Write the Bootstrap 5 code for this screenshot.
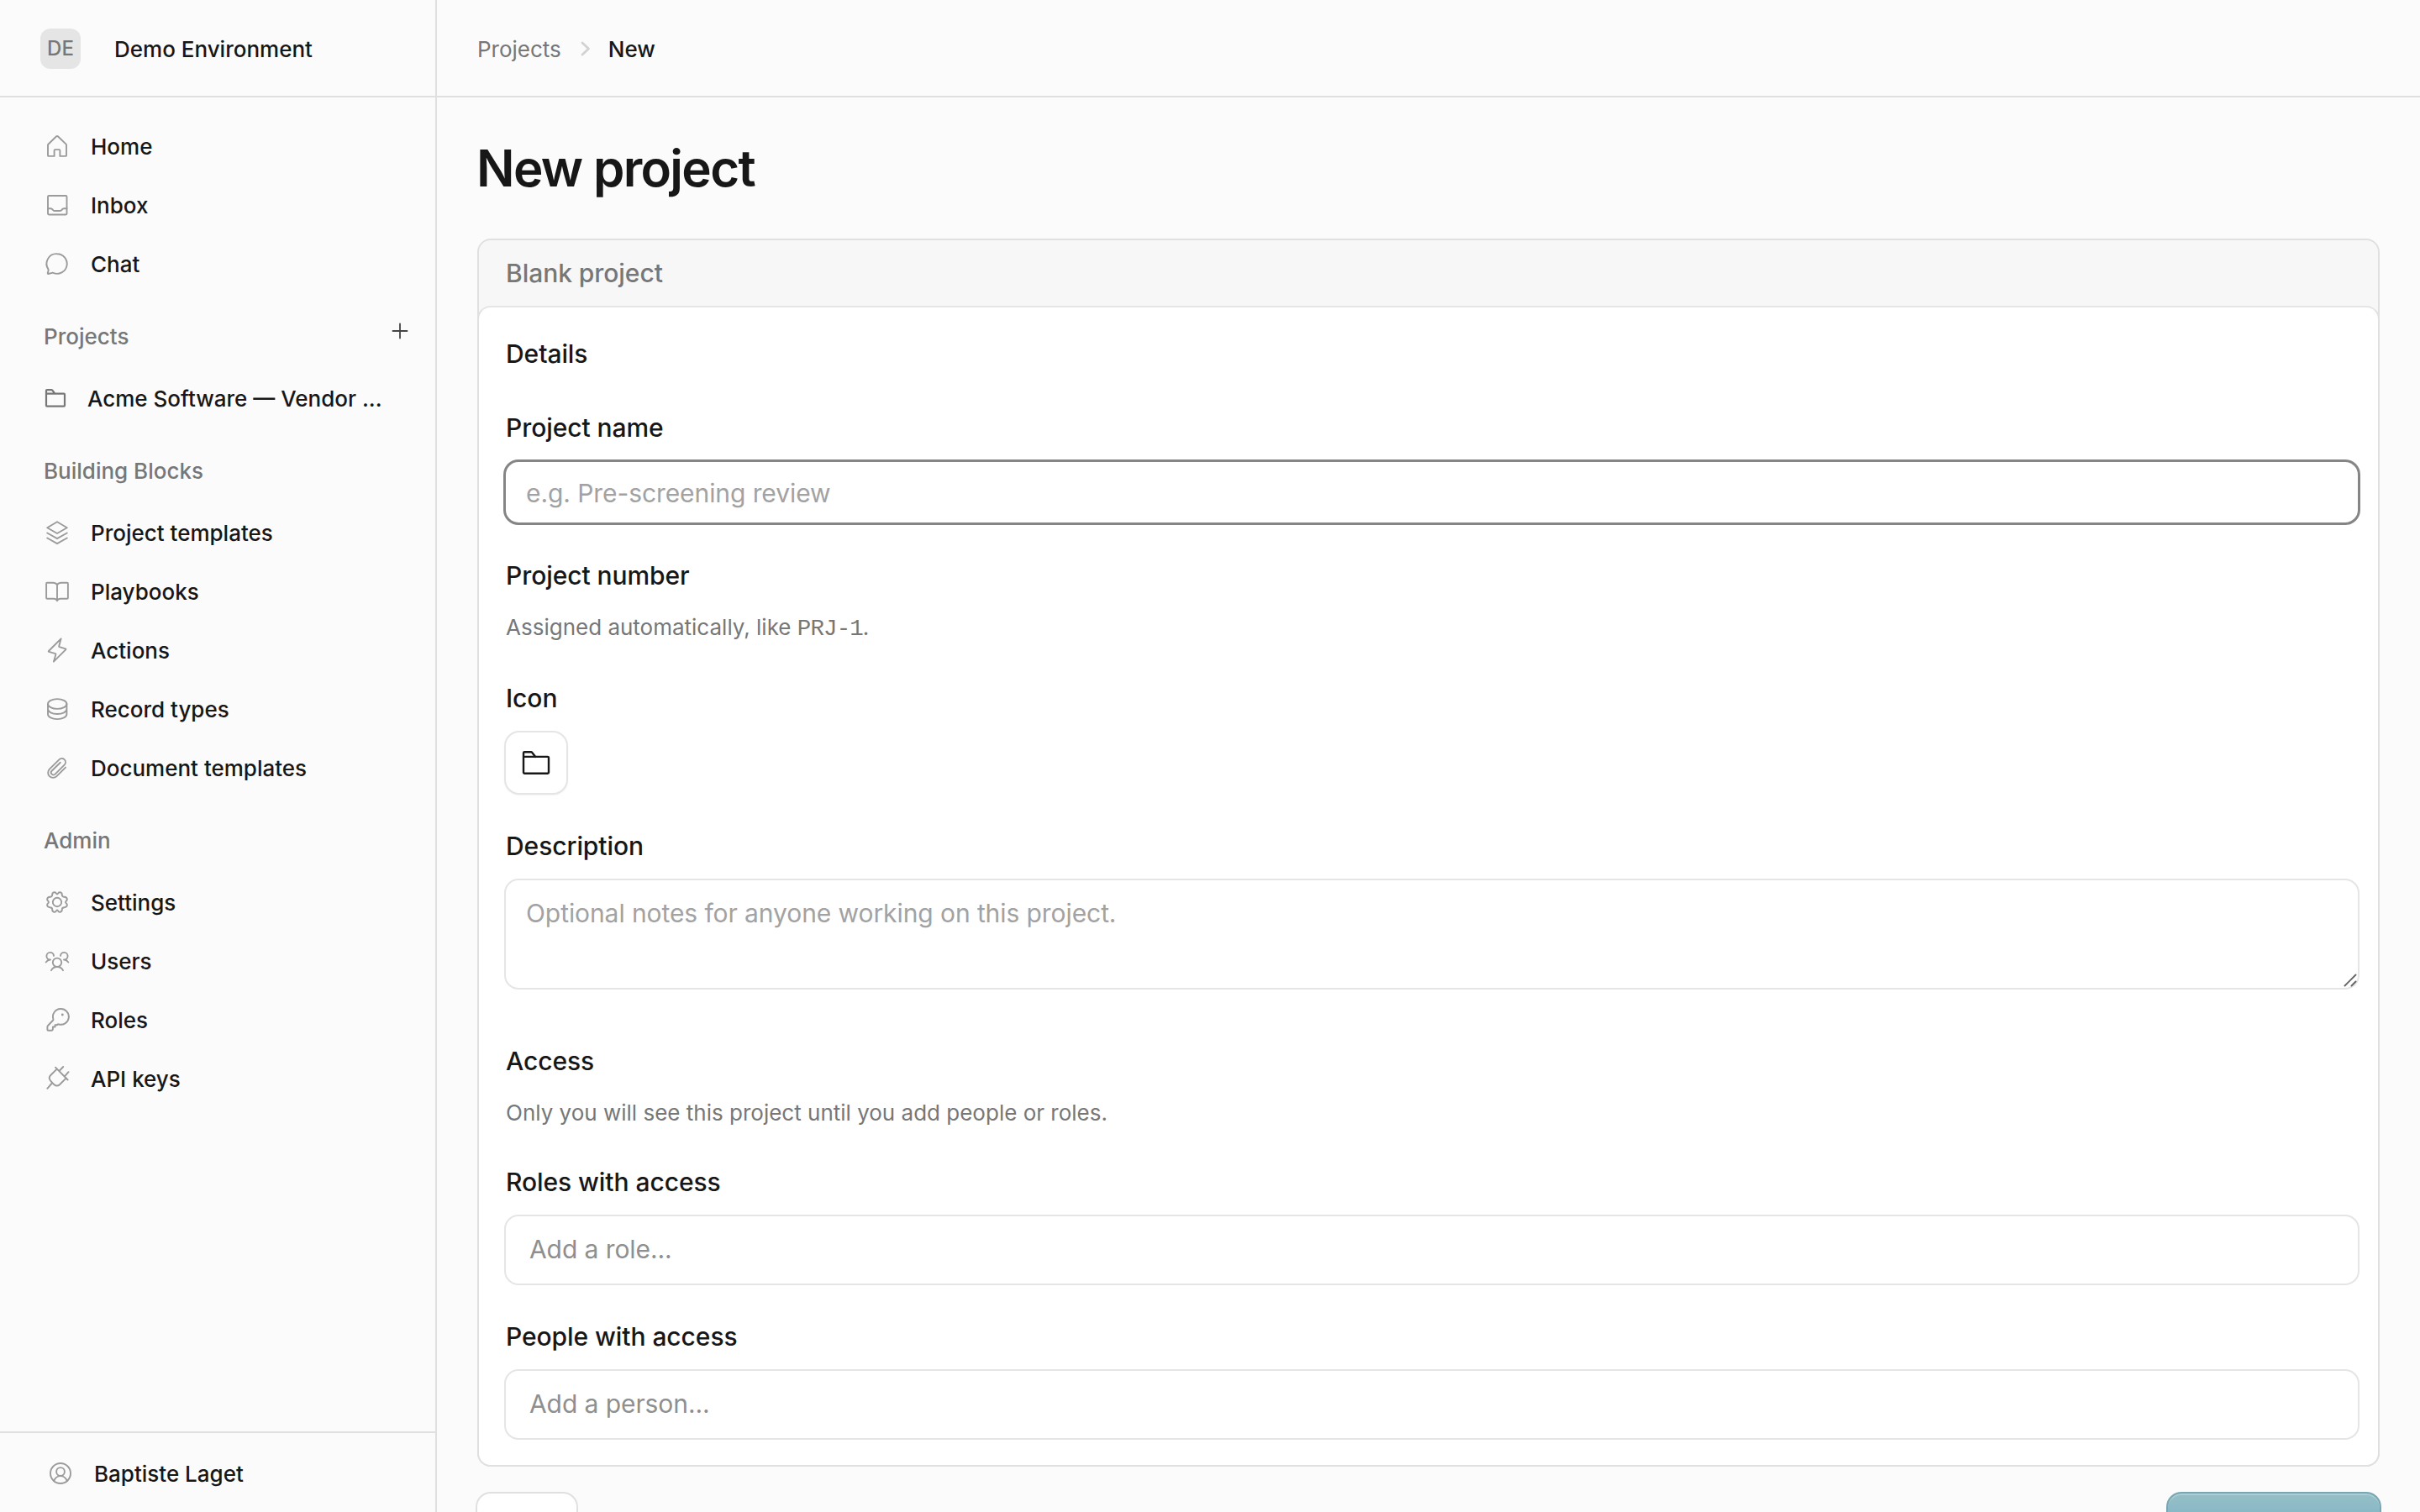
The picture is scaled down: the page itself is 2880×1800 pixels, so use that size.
<!DOCTYPE html>
<html lang="en">
<head>
<meta charset="utf-8">
<meta name="viewport" content="width=device-width, initial-scale=1">
<title>New project</title>
<link href="https://cdn.jsdelivr.net/npm/bootstrap@5.3.0/dist/css/bootstrap.min.css" rel="stylesheet">
<style>
body{font-family:Inter,"Liberation Sans",sans-serif;font-size:26px;line-height:31px;color:#171717;background:#fbfbfb;height:100vh;overflow:hidden}
.side{width:520px;border-right:2px solid #e0e0e0;flex:none}
.bar{height:116px;border-bottom:2px solid #e0e0e0;flex:none;padding-top:2px}
.side .bar{padding-left:48px}
.avatar{width:48px;height:48px;border-radius:12px;background:#e5e5e5;color:#777;font-size:24px;line-height:29px;padding-top:9px;text-align:center}
.semi{font-weight:500}
.org{margin-left:40px;padding-top:1px}
.menu-top{padding-top:23px}
.item{height:70px;padding-left:52px;color:#171717;text-decoration:none;font-weight:500;white-space:nowrap}
.item span{padding-top:1px}
.item svg{width:32px;height:32px;margin-right:24px;color:#9b9b9b}
.item.sub svg{width:28px;height:32px;margin-right:24px;color:#777}
.side svg,.pick svg,.crumb-sep,.grip{fill:none;stroke:currentColor;stroke-width:1.9;stroke-linejoin:round;stroke-linecap:round;flex:none}
.heading{margin:36px 0 23px;padding:0 32px 0 52px;height:31px;color:#777;font-weight:500}
.heading svg{width:20px;height:20px;color:#444;margin-top:-1px;stroke-width:1.8}
.user{height:96px;border-top:2px solid #e0e0e0;padding:2px 0 0 56px;font-weight:500;flex:none}
.user svg{width:32px;height:32px;color:#9b9b9b;margin-right:24px}
.main .bar{padding-left:48px}
.bar .crumb{padding-top:1px}
.muted{color:#777}
.crumb-sep{width:12px;height:18px;color:#d2d2d2;stroke-width:2.8;margin:0 21px 0 23px}
.content{padding:48px 48px 0}
h1{font-size:60px;line-height:72px;font-weight:600;letter-spacing:-.028em;margin:0 0 48px -1px;color:#171717}
.shell{border:2px solid #e0e0e0;border-radius:16px;background:#f7f7f7}
.shell-title{padding:21px 32px;font-size:30px;line-height:36px;font-weight:500;color:#777;letter-spacing:-.05px}
.panel{margin:0 -2px -2px;border:2px solid #e0e0e0;border-top-color:#e5e5e5;border-radius:16px;background:#fff;padding:37px 22px 30px 30px}
.lab{display:block;font-size:30px;line-height:36px;font-weight:500;margin:0 0 21px;padding-left:2px;letter-spacing:-.07px}
.lab.first{margin-bottom:52px}
.field{display:block;width:100%;border:2px solid #e5e5e5;border-radius:17px;background:#fff;font-size:30px;line-height:36px;letter-spacing:-.08px;box-shadow:none;outline:0;padding:19px 24px 17px;height:76px;margin:0 0 43px;color:#171717}
.field::placeholder{color:#a2a2a2;opacity:1}
.field.active{border-color:#858585;box-shadow:0 0 0 1px #858585}
.field.notes{height:132px;padding-top:21px;resize:none;margin-bottom:0}
.notes-wrap{margin-bottom:67px}
.grip{position:absolute;right:3px;bottom:3px;width:16px;height:16px;color:#666}
.field.tall{height:84px;padding:21px 28px 23px}
.field.tall::placeholder{color:#8f8f8f}
.hint{color:#777;height:31px;padding-left:2px;margin:28px 0 51px}
.hint.access{margin-bottom:49px}
code.num{font-family:"Liberation Mono",monospace;font-size:27.500px;letter-spacing:-.9px;line-height:0;color:inherit}
.pick{width:76px;height:76px;border:2px solid #e5e5e5;border-radius:18px;background:#fff;margin-bottom:43px;box-shadow:0 1px 2px rgba(0,0,0,.05);padding:0;color:#171717}
.pick svg{width:40px;height:40px;stroke-width:2.4}
.actions{margin:30px -2px 0}
.btn-plain{width:122px;height:80px;border:2px solid #e0e0e0;border-radius:18px;background:#fff}
.btn-teal{width:256px;height:80px;border:2px solid #78a7b4;border-radius:18px;background:linear-gradient(#95bfc7,#89b8c6 24px,#7fb0c3);box-shadow:inset 0 2px 0 rgba(255,255,255,.22)}
</style>
</head>
<body class="d-flex">
<aside class="side d-flex flex-column vh-100">
  <div class="bar d-flex align-items-center semi"><div class="avatar">DE</div><div class="org">Demo Environment</div></div>
  <nav class="menu-top flex-grow-1">
    <a class="item d-flex align-items-center"><svg viewBox="0 0 32 32"><path d="M5 14.6V27q0 .9.9.9H12.600V21q0-.9.9-.9h5q.9 0 .9.9v6.900h6.700q.9 0 .9-.9V14.600q0-.5-.4-.9L16.800 4.300q-.8-.7-1.600 0L5.400 13.700q-.4.4-.4.9Z"/></svg><span>Home</span></a>
    <a class="item d-flex align-items-center"><svg viewBox="0 0 32 32"><rect x="5" y="5" width="22.500" height="22.500" rx="1.200"/><path d="M5 20.200h3.400q.8 0 1.400.6l1.800 1.700q.6.5 1.400.5h6.400q.8 0 1.400-.5l1.800-1.700q.6-.6 1.400-.6h3.500"/></svg><span>Inbox</span></a>
    <a class="item d-flex align-items-center"><svg viewBox="0 0 32 32"><path d="M16 4.200a11.800 11.800 0 1 1-4.600 22.700q-.7-.3-1.400-.1l-4.500 1.200q-.9.100-.8-.8l.9-3.200q.2-.7-.1-1.400A11.800 11.800 0 0 1 16 4.200Z"/></svg><span>Chat</span></a>
    <div class="heading d-flex justify-content-between"><span>Projects</span><svg viewBox="0 0 20 20"><path d="M10 1.500v17M1.500 10h17"/></svg></div>
    <a class="item sub d-flex align-items-center"><svg viewBox="0 0 28 32"><path d="M3 10.700V7.100q0-1 1-1h5.200q.6 0 1 .4l2.800 3.600M4 10.700h20q1 0 1 1v13q0 1-1 1H4q-1 0-1-1v-14Z" stroke-width="2.200"/></svg><span>Acme Software — Vendor ...</span></a>
    <div class="heading">Building Blocks</div>
    <a class="item d-flex align-items-center"><svg viewBox="0 0 32 32"><path d="M4.200 10.200 16 3.300l11.800 6.900L16 17ZM4.200 16.500 16 23.200l11.800-6.700M4.200 22.500 16 29.200l11.800-6.700"/></svg><span>Project templates</span></a>
    <a class="item d-flex align-items-center"><svg viewBox="0 0 32 32"><path d="M16 8.200q-1.600-2.400-5-2.400H4.100q-1 0-1 1V23.800q0 1 1 1H12q3 0 4 2.400 1-2.400 4-2.400h7.900q1 0 1-1V6.800q0-1-1-1H21q-3.400 0-5 2.400ZM16 8.200v19"/></svg><span>Playbooks</span></a>
    <a class="item d-flex align-items-center"><svg viewBox="0 0 32 32"><path d="M20.600 2.300 6 17q-.6.600.2.900l7.700 2.300q.6.200.5.800l-2.500 8.700L26.200 15.300q.6-.6-.2-.9l-7.300-2.200q-.6-.2-.5-.9Z"/></svg><span>Actions</span></a>
    <a class="item d-flex align-items-center"><svg viewBox="0 0 32 32"><ellipse cx="16.200" cy="10" rx="11.200" ry="5.900"/><path d="M5 10v12.200c0 3.300 5 5.900 11.200 5.900s11.200-2.600 11.200-5.900V10M5 16.100C5 19.400 10 22 16.200 22s11.200-2.600 11.200-5.900"/></svg><span>Record types</span></a>
    <a class="item d-flex align-items-center"><svg viewBox="0 0 32 32"><path d="m26 15.600-10.600 10.500a5.900 5.900 0 0 1-8.500-8.400L18.300 6.300a4.350 4.350 0 0 1 6.500 6.100L13.600 23.600a2.700 2.700 0 0 1-4-3.900L19.800 9.700"/></svg><span>Document templates</span></a>
    <div class="heading">Admin</div>
    <a class="item d-flex align-items-center"><svg viewBox="0 0 32 32"><circle cx="16" cy="16" r="5.200"/><path d="M12.300 4.200Q14.400 4 15 5.800Q16 7.200 17 5.800Q17.600 4 19.700 4.200Q22 5 21.800 7.500Q22 9.700 24.500 9.800Q27.600 10 27.900 12.600Q27.900 14 26.500 15Q25.500 16 26.500 17Q27.900 18 27.900 19.400Q27.600 22 24.500 22.200Q22 22.300 21.800 24.500Q22 27 19.700 27.800Q17.600 28 17 26.200Q16 24.800 15 26.200Q14.400 28 12.300 27.800Q10 27 10.200 24.500Q10 22.300 7.500 22.200Q4.400 22 4.100 19.400Q4.100 18 5.500 17Q6.500 16 5.500 15Q4.100 14 4.100 12.600Q4.400 10 7.500 9.800Q10 9.700 10.200 7.500Q10 5 12.300 4.200Z"/></svg><span>Settings</span></a>
    <a class="item d-flex align-items-center"><svg viewBox="0 0 32 32"><circle cx="16" cy="17.800" r="5.200"/><path d="M9 27.200q2-4.200 7-4.200t7 4.200M12 9.900A4.300 4.300 0 1 0 7.400 14.500Q4.600 14.900 2.700 17.500M7.400 14.500H8M20 9.900a4.300 4.300 0 1 1 4.600 4.600q2.800.4 4.700 3M24.600 14.500H24"/></svg><span>Users</span></a>
    <a class="item d-flex align-items-center"><svg viewBox="0 0 32 32"><path d="M20 3a9.400 9.400 0 1 1-2.500 18.300q-.6-.2-1 .2l-.7.800H13.500v2.200h-2.600v2.300q0 2-1.700 2H5.400q-1 0-1-1v-3.400q0-.8.6-1.400l6.200-6.500q.5-.5.200-1.200A9.400 9.400 0 0 1 20 3Z"/><circle cx="22.300" cy="10" r=".7" fill="currentColor" stroke-width="1.500"/></svg><span>Roles</span></a>
    <a class="item d-flex align-items-center"><svg viewBox="0 0 32 32"><path d="m14 2.700 14.600 14.800M15.700 4.600 8.300 12q-3.200 3.200 0 6.800l3.900 4.200q3.600 3.200 7 0l7.600-7.600M18.500 7l4.700-5M25.200 13.200l4.300-5M10.300 21 4.300 27.800"/></svg><span>API keys</span></a>
  </nav>
  <div class="user d-flex align-items-center"><svg viewBox="0 0 32 32"><circle cx="16" cy="16" r="12"/><circle cx="16" cy="14" r="4.900"/><path d="M8.200 25q2.300-5.900 7.800-5.900t7.800 5.900"/></svg><span>Baptiste Laget</span></div>
</aside>
<main class="main flex-grow-1 d-flex flex-column">
  <div class="bar d-flex align-items-center"><span class="muted crumb">Projects</span><svg class="crumb-sep" viewBox="0 0 12 18"><path d="m2 2 7.500 7L2 16"/></svg><span class="semi crumb">New</span></div>
  <div class="content">
    <h1>New project</h1>
    <section class="shell">
      <div class="shell-title">Blank project</div>
      <div class="panel">
        <div class="lab first">Details</div>
        <label class="lab">Project name</label>
        <input class="field active" placeholder="e.g. Pre-screening review">
        <div class="lab mb-0">Project number</div>
        <div class="hint">Assigned automatically, like <code class="num">PRJ-1</code>.</div>
        <div class="lab">Icon</div>
        <button class="pick d-flex align-items-center justify-content-center"><svg viewBox="0 0 40 40"><path d="M5 13V8.500q0-1.200 1.200-1.200H14q.8 0 1.300.6l4 5M6.200 12.900h27.600q1.200 0 1.200 1.200v17.500q0 1.200-1.200 1.200H6.200Q5 32.800 5 31.600V12.900Z"/></svg></button>
        <label class="lab">Description</label>
        <div class="notes-wrap position-relative">
          <textarea class="field notes" placeholder="Optional notes for anyone working on this project."></textarea>
          <svg class="grip" viewBox="0 0 16 16"><path d="M1.500 14.500 14.500 1.500M9.500 14.500l5-5"/></svg>
        </div>
        <div class="lab mb-0">Access</div>
        <div class="hint access">Only you will see this project until you add people or roles.</div>
        <label class="lab">Roles with access</label>
        <input class="field tall" placeholder="Add a role...">
        <label class="lab">People with access</label>
        <input class="field tall mb-0" placeholder="Add a person...">
      </div>
    </section>
    <div class="actions d-flex justify-content-between"><button class="btn-plain" aria-label="Cancel"></button><button class="btn-teal" aria-label="Create"></button></div>
  </div>
</main>
<script src="https://cdn.jsdelivr.net/npm/bootstrap@5.3.0/dist/js/bootstrap.bundle.min.js"></script>
</body>
</html>
